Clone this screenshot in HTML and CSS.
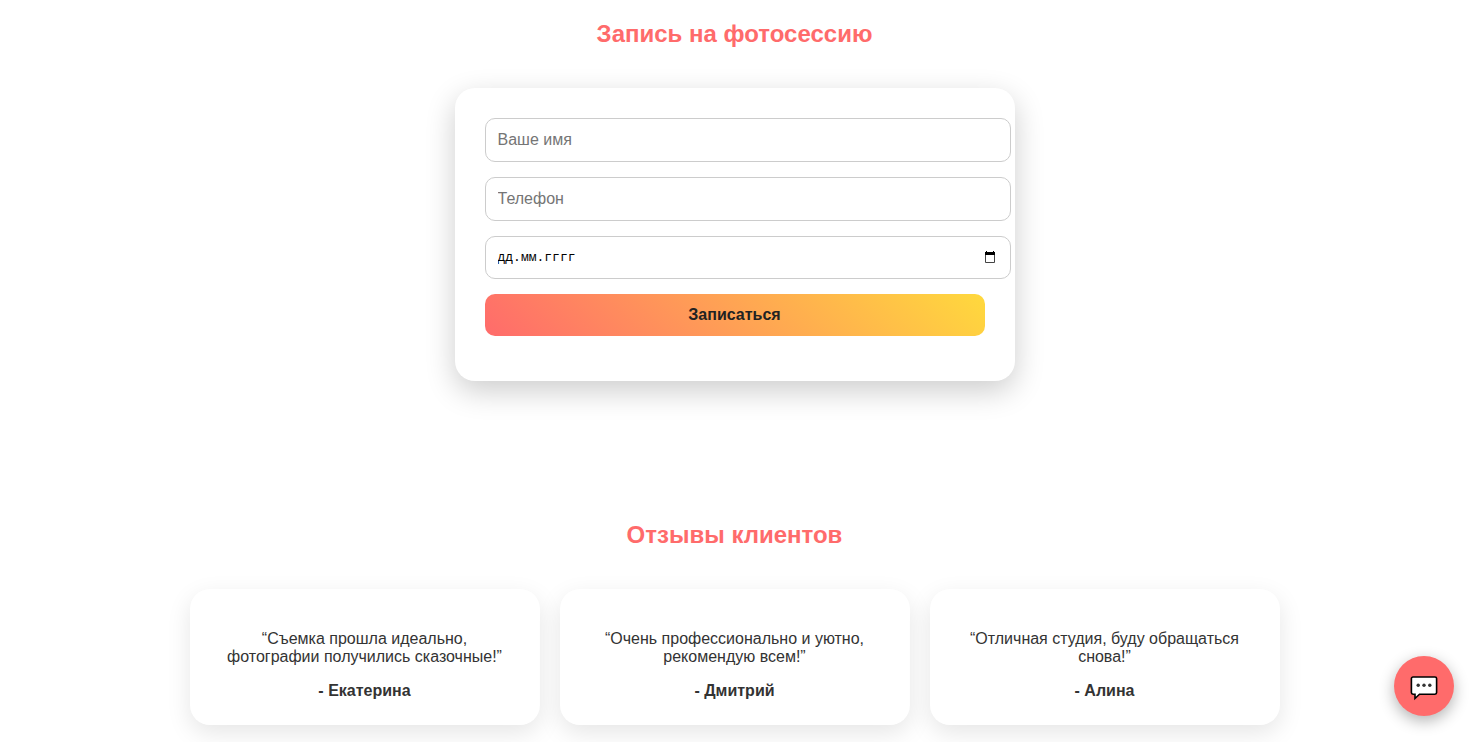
FILE: index.html
```
<!DOCTYPE html>
<html lang="ru">
  <head>
    <meta charset="UTF-8" />
    <meta name="viewport" content="width=device-width, initial-scale=1.0" />
    <title>Фотостудия</title>
    <link rel="stylesheet" href="styles.css">
  </head>
  <body>
    <section class="booking" id="booking">
      <h2>Запись на фотосессию</h2>
      <form class="booking-form">
        <input type="text" name="name" placeholder="Ваше имя" aria-label="Ваше имя" required />
        <input type="tel" name="phone" placeholder="Телефон" aria-label="Телефон" required />
        <div class="date-field">
          <input type="text" name="date" placeholder="дд.мм.гггг" aria-label="Дата съемки" required />
          <button type="button" class="date-button" aria-label="Выбрать дату">
            <svg width="13" height="13" viewBox="0 0 13 13">
              <path d="M1.5 2.5h9v9h-9z" fill="none" stroke="#444" />
              <path d="M1 1h10v3H1zM2 0h1v1H2zM9 0h1v1H9z" fill="#000" />
            </svg>
          </button>
        </div>
        <button type="submit" class="submit-button">Записаться</button>
      </form>
    </section>

    <section class="reviews" id="reviews">
      <h2>Отзывы клиентов</h2>
      <div class="review-list">
        <div class="review">
          <p>“Съемка прошла идеально, фотографии получились сказочные!”</p>
          <strong>- Екатерина</strong>
        </div>
        <div class="review">
          <p>“Очень профессионально и уютно, рекомендую всем!”</p>
          <strong>- Дмитрий</strong>
        </div>
        <div class="review">
          <p>“Отличная студия, буду обращаться снова!”</p>
          <strong>- Алина</strong>
        </div>
      </div>
    </section>

    <button type="button" class="chat-button" aria-label="Открыть чат">
      <svg width="28" height="26" viewBox="0 0 28 26">
        <path
          d="M3 2h22a1.6 1.6 0 0 1 1.6 1.6v14a1.6 1.6 0 0 1-1.6 1.6H9.5L5 23.5V19.2H3a1.6 1.6 0 0 1-1.6-1.6v-14A1.6 1.6 0 0 1 3 2z"
          fill="#fff" stroke="#000" stroke-width="1.6"
        />
        <circle cx="8.2" cy="10.3" r="1.7" fill="#333" />
        <circle cx="14" cy="10.3" r="1.7" fill="#333" />
        <circle cx="19.8" cy="10.3" r="1.7" fill="#333" />
      </svg>
    </button>
  </body>
</html>
```

FILE: styles.css
```
body {
  margin: 0;
  padding-right: 13px;
  font-family: "Liberation Sans", Arial, sans-serif;
  font-size: 16px;
  line-height: 18px;
  background-color: #fff;
  color: #333;
}

h2 {
  margin: 0 0 40px;
  font-size: 24px;
  line-height: 28px;
  text-align: center;
  color: #ff6b6b;
}

.booking {
  padding: 20px 20px 60px;
}

.booking-form {
  max-width: 500px;
  margin: 0 auto;
  padding: 30px;
  background-color: #fff;
  border-radius: 20px;
  box-shadow: 0 10px 30px rgba(0, 0, 0, 0.2);
}

.booking-form input {
  display: block;
  width: 100%;
  margin-bottom: 15px;
  padding: 12px;
  border: 1px solid #ccc;
  border-radius: 10px;
  background-color: #fff;
  font-family: inherit;
  font-size: 16px;
  line-height: 18px;
}

.booking-form input::placeholder {
  color: #757575;
}

.date-field {
  position: relative;
}

.booking-form .date-field input {
  height: 17px;
  font-family: "Liberation Mono", monospace;
  font-size: 13px;
}

.booking-form .date-field input::placeholder {
  color: #000;
}

/* иконка календаря поверх поля */
.date-button {
  position: absolute;
  top: 15px;
  right: -12px;
  display: flex;
  padding: 0;
  border: none;
  background: none;
  cursor: pointer;
}

.submit-button {
  display: block;
  width: 100%;
  margin-bottom: 15px;
  padding: 12px;
  border: none;
  border-radius: 10px;
  background: linear-gradient(45deg, #ff6b6b, #ffd93d);
  color: #222;
  font-family: inherit;
  font-size: 16px;
  font-weight: bold;
  line-height: 18px;
  cursor: pointer;
}

.reviews {
  padding: 80px 20px 17px;
}

.review-list {
  display: flex;
  flex-wrap: wrap;
  justify-content: center;
  gap: 20px;
}

.review {
  width: 300px;
  padding: 25px;
  background-color: #fff;
  border-radius: 20px;
  box-shadow: 0 8px 25px rgba(0, 0, 0, 0.1);
  text-align: center;
}

.review p {
  margin: 16px 0;
}

.review strong {
  display: block;
}

.chat-button {
  position: fixed;
  right: 28px;
  bottom: 26px;
  display: flex;
  align-items: center;
  justify-content: center;
  width: 60px;
  height: 60px;
  padding: 4px 0 0;
  border: none;
  border-radius: 50%;
  background-color: #ff6b6b;
  box-shadow: 0 5px 15px rgba(0, 0, 0, 0.3);
  cursor: pointer;
}
```
